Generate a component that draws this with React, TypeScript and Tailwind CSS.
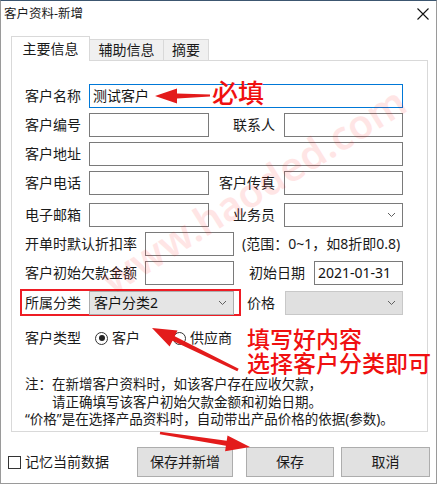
import React from "react";

const font = "font-['Noto_Sans','Noto_Sans_CJK_SC',sans-serif]";

function Chevron({ className = "" }: { className?: string }) {
  return (
    <svg width="9" height="6" viewBox="0 0 9 6" className={className}>
      <path d="M1 1 L4.5 4.5 L8 1" fill="none" stroke="#606060" strokeWidth="1" />
    </svg>
  );
}

function Field({ w, value = "", focus = false }: { w: string; value?: string; focus?: boolean }) {
  return (
    <div
      className={`${w} h-[24px] border bg-white flex items-center px-[3px] text-[14px] leading-none text-[#111] ${
        focus ? "border-[#0078d7]" : "border-[#7a7a7a]"
      }`}
    >
      {value}
    </div>
  );
}

function Select({ w, value = "", disabled = false }: { w: string; value?: string; disabled?: boolean }) {
  return (
    <div
      className={`${w} h-[24px] border flex items-center justify-between pl-[4px] pr-[6px] text-[14px] leading-none text-[#111] ${
        disabled ? "bg-[#e0e0e0] border-[#c8c8c8]" : value ? "bg-[#e5e5e5] border-[#adadad]" : "bg-white border-[#7a7a7a]"
      }`}
    >
      <span>{value}</span>
      <Chevron />
    </div>
  );
}

export default function App() {
  return (
    <div className={`relative w-[440px] h-[485px] bg-white ${font} text-[#1a1a1a] overflow-hidden`}>
      <div className="w-[437px] h-[484px] border-t border-t-[#3c5670] border-l border-r border-b border-[#9a9a9a] flex flex-col">
        {/* title bar */}
        <div className="h-[35px] flex items-start justify-between pl-[3px] pr-[6px]">
          <span className="text-[12.5px] leading-none mt-[7px]">客户资料-新增</span>
          <svg width="12" height="12" viewBox="0 0 12 12" className="mt-[7px] mr-[1px]">
            <path d="M0.5 0.5 L11.5 11.5 M11.5 0.5 L0.5 11.5" stroke="#111" strokeWidth="1.1" />
          </svg>
        </div>

        {/* tabs */}
        <div className="flex items-end pl-[10px] h-[25px] relative z-10">
          <div className="w-[79px] h-[25px] bg-white border border-[#d9d9d9] border-b-0 flex items-center justify-center text-[14px] leading-none pb-[1px]">
            主要信息
          </div>
          <div className="w-[74px] h-[21px] bg-[#f0f0f0] border-t border-r border-[#d9d9d9] flex items-center justify-center text-[14px] leading-none mb-[1px]">
            辅助信息
          </div>
          <div className="w-[45px] h-[21px] bg-[#f0f0f0] border-t border-r border-[#d9d9d9] flex items-center justify-center text-[14px] leading-none mb-[1px]">
            摘要
          </div>
        </div>

        {/* panel */}
        <div className="ml-[10px] w-[417px] h-[372px] -mt-[1px] border border-[#d9d9d9] bg-white pl-[13px] pt-[23px] flex flex-col text-[14px] leading-none">
          <div className="flex items-center h-[24px]">
            <span className="w-[64px]">客户名称</span>
            <Field w="w-[314px]" value="测试客户" focus />
          </div>
          <div className="flex items-center h-[24px] mt-[5px]">
            <span className="w-[64px]">客户编号</span>
            <Field w="w-[120px]" />
            <span className="w-[75px] text-right pr-[9px]">联系人</span>
            <Field w="w-[119px]" />
          </div>
          <div className="flex items-center h-[24px] mt-[5px]">
            <span className="w-[64px]">客户地址</span>
            <Field w="w-[314px]" />
          </div>
          <div className="flex items-center h-[24px] mt-[5px]">
            <span className="w-[64px]">客户电话</span>
            <Field w="w-[120px]" />
            <span className="w-[75px] text-right pr-[9px]">客户传真</span>
            <Field w="w-[119px]" />
          </div>
          <div className="flex items-center h-[24px] mt-[8px]">
            <span className="w-[64px]">电子邮箱</span>
            <Field w="w-[120px]" />
            <span className="w-[75px] text-right pr-[9px]">业务员</span>
            <Select w="w-[119px]" />
          </div>
          <div className="flex items-center h-[24px] mt-[5px]">
            <span className="w-[120px]">开单时默认折扣率</span>
            <Field w="w-[89px]" />
            <span className="pl-[8px] whitespace-nowrap">(范围：0~1，如8折即0.8)</span>
          </div>
          <div className="flex items-center h-[24px] mt-[5px]">
            <span className="w-[120px]">客户初始欠款金额</span>
            <Field w="w-[89px]" />
            <span className="w-[80px] text-right pr-[9px]">初始日期</span>
            <Field w="w-[89px]" value="2021-01-31" />
          </div>
          <div className="flex items-center h-[27px] mt-[4px]">
            <div className="-ml-[5px] h-[27px] border-2 border-[#ee1c24] flex items-center pl-[3px] pr-[5px]">
              <span className="w-[64px]">所属分类</span>
              <Select w="w-[145px]" value="客户分类2" />
            </div>
            <span className="w-[44px] text-right pr-[10px]">价格</span>
            <Select w="w-[118px]" disabled />
          </div>
          <div className="flex items-center h-[20px] mt-[12px]">
            <span className="w-[70px]">客户类型</span>
            <span className="w-[13px] h-[13px] rounded-full border border-[#333] flex items-center justify-center">
              <span className="w-[6px] h-[6px] rounded-full bg-[#222]" />
            </span>
            <span className="ml-[4px]">客户</span>
            <span className="ml-[33px] w-[13px] h-[13px] rounded-full border border-[#333]" />
            <span className="ml-[4px]">供应商</span>
          </div>
          <div className="mt-[28px] text-[13.5px] leading-[17.5px]">
            <div>注：在新增客户资料时，如该客户存在应收欠款，</div>
            <div className="pl-[27px]">请正确填写该客户初始欠款金额和初始日期。</div>
            <div>“价格”是在选择产品资料时，自动带出产品价格的依据(参数)。</div>
          </div>
        </div>

        {/* bottom bar */}
        <div className="flex items-center mt-[15px] pl-[7px]">
          <span className="w-[13px] h-[13px] border border-[#333] bg-white" />
          <span className="ml-[4px] text-[14px] leading-none w-[112px]">记忆当前数据</span>
          <button className="w-[96px] h-[30px] bg-[#e1e1e1] border border-[#adadad] text-[14px] leading-none">保存并新增</button>
          <button className="ml-[13px] w-[88px] h-[30px] bg-[#e1e1e1] border border-[#adadad] text-[14px] leading-none">保存</button>
          <button className="ml-[7px] w-[89px] h-[30px] bg-[#e1e1e1] border border-[#adadad] text-[14px] leading-none">取消</button>
        </div>
      </div>

      {/* watermark */}
      <div className="absolute left-[78px] top-[170px] -rotate-[32deg] text-[40px] leading-none font-semibold text-[#ff0000]/10 pointer-events-none whitespace-nowrap">
        www.haoded.com
      </div>

      {/* annotations */}
      <svg className="absolute left-0 top-0 pointer-events-none" width="440" height="485" viewBox="0 0 440 485">
        <g fill="#e31b1b">
          <polygon points="155,96 177,88.5 177,93.5 210,94.5 210,96.5 177,98.5 177,103.5" />
          <polygon points="152,328 177.5,330.4 174.7,336.3 238.7,368.7 237.3,371.3 172.5,340.7 169.6,346.6" />
          <polygon points="250,447 227.5,435.4 226.7,440.8 160.2,431.8 159.8,434.2 225.9,445.8 225.1,451.2" />
        </g>
      </svg>
      <div className="absolute left-[212px] top-[80px] text-[26px] leading-none font-medium text-[#f01010]">必填</div>
      <div className="absolute left-[247px] top-[327px] text-[23px] leading-[24px] font-medium text-[#f01010] whitespace-nowrap">
        <div>填写好内容</div>
        <div>选择客户分类即可</div>
      </div>
    </div>
  );
}
